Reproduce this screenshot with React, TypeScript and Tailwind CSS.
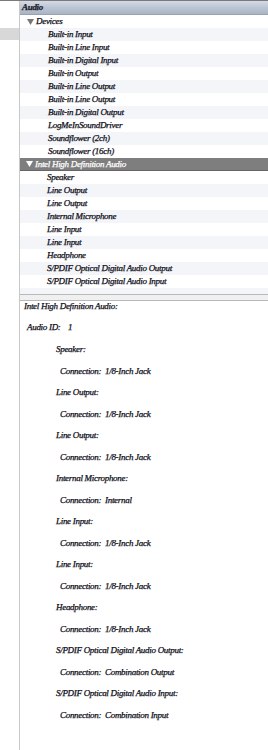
import React from "react";

const devices = [
  "Built-in Input",
  "Built-in Line Input",
  "Built-in Digital Input",
  "Built-in Output",
  "Built-in Line Output",
  "Built-in Line Output",
  "Built-in Digital Output",
  "LogMeInSoundDriver",
  "Soundflower (2ch)",
  "Soundflower (16ch)",
];

const intelItems = [
  { name: "Speaker", conn: "1/8-Inch Jack" },
  { name: "Line Output", conn: "1/8-Inch Jack" },
  { name: "Line Output", conn: "1/8-Inch Jack" },
  { name: "Internal Microphone", conn: "Internal" },
  { name: "Line Input", conn: "1/8-Inch Jack" },
  { name: "Line Input", conn: "1/8-Inch Jack" },
  { name: "Headphone", conn: "1/8-Inch Jack" },
  { name: "S/PDIF Optical Digital Audio Output", conn: "Combination Output" },
  { name: "S/PDIF Optical Digital Audio Input", conn: "Combination Input" },
];

function Triangle({ color }: { color: string }) {
  return (
    <svg width="7" height="6" viewBox="0 0 7 6" className="shrink-0">
      <path d="M0 0 L7 0 L3.5 6 Z" fill={color} />
    </svg>
  );
}

export default function App() {
  // row index counts from the Devices row, used for striping
  let row = 0;
  const stripe = () => (row++ % 2 === 1 ? "bg-[#f3f5f8]" : "bg-white");

  return (
    <div
      className="flex w-[268px] h-[750px] bg-white border-t border-[#7a7a7a] overflow-hidden text-[9px] italic text-[#0e0e18] leading-none tracking-[-0.3px] [-webkit-text-stroke:0.25px_currentColor]"
      style={{ fontFamily: '"Liberation Serif", "Times New Roman", serif' }}
    >
      {/* source list strip on the left */}
      <div className="w-[20px] shrink-0 border-r border-[#c8c8c8] flex flex-col">
        <div className="h-[27px]" />
        <div className="h-[12px] bg-[#d8d8d8]" />
      </div>

      <div className="flex-1 flex flex-col min-w-0">
        {/* tree list */}
        <div className="flex flex-col">
          <div className="h-[14px] flex items-center pl-[2px] font-bold text-[#1c1c28] bg-gradient-to-b from-[#d5dbe5] via-[#bcc5d3] to-[#aab4c4] border-b border-[#98a2b2]">
            Audio
          </div>
          <div className={`h-[13px] flex items-center pl-[7px] gap-[2px] ${stripe()}`}>
            <Triangle color="#777" />
            <span>Devices</span>
          </div>
          {devices.map((d, i) => (
            <div key={i} className={`h-[13px] flex items-center pl-[28px] ${stripe()}`}>
              {d}
            </div>
          ))}
          <div className="h-[13px] flex items-center pl-[6px] gap-[2px] bg-[#7e7e7e] border-b border-[#666] text-white">
            <Triangle color="#fff" />
            <span>Intel High Definition Audio</span>
          </div>
          {(() => {
            row++;
            return null;
          })()}
          {intelItems.map((it, i) => (
            <div key={i} className={`h-[13px] flex items-center pl-[27px] ${stripe()}`}>
              {it.name}
            </div>
          ))}
          <div className={`h-[6px] ${stripe()}`} />
        </div>

        {/* splitter */}
        <div className="h-[7px] border-t border-b border-[#b9b9b9] bg-[#f0f0f0]" />

        {/* detail pane */}
        <div className="flex flex-col">
          <div className="h-[21px] flex items-start pl-[4px] pt-[1px]">Intel High Definition Audio:</div>
          <div className="h-[22px] flex items-start pl-[7px] pt-[1px]">
            <span className="w-[41px] shrink-0">Audio ID:</span>
            <span>1</span>
          </div>
          {intelItems.map((it, i) => (
            <React.Fragment key={i}>
              <div className="h-[21.5px] flex items-start pl-[36px] pt-[1px]">{it.name}:</div>
              <div className="h-[21.5px] flex items-start pl-[40px] pt-[1px]">
                <span className="w-[45px] shrink-0">Connection:</span>
                <span>{it.conn}</span>
              </div>
            </React.Fragment>
          ))}
        </div>
      </div>
    </div>
  );
}
